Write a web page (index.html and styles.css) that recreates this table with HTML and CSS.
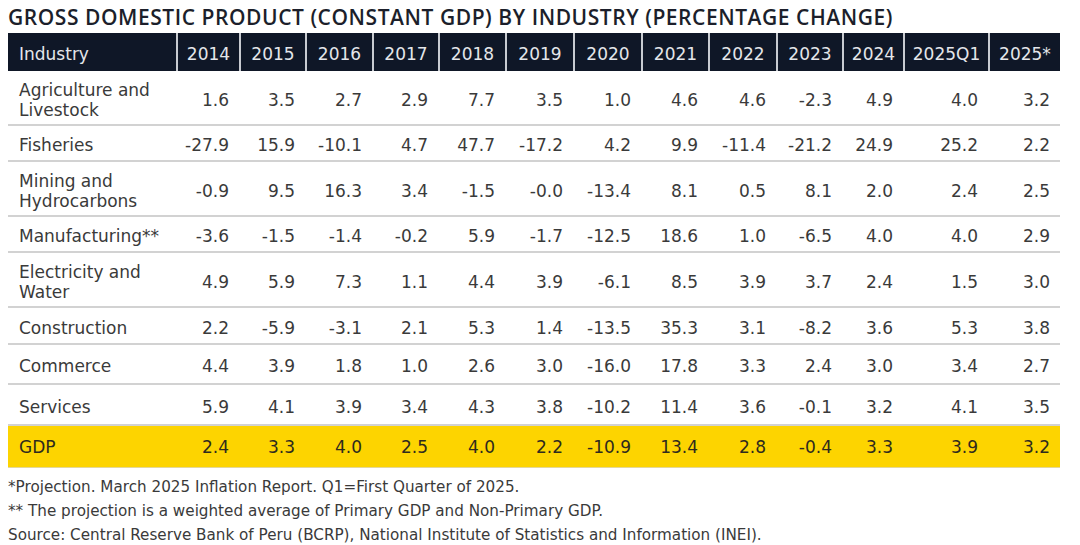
FILE: index.html
```html
<!DOCTYPE html>
<html lang="en">
<head>
<meta charset="utf-8">
<title>GDP by Industry</title>
<link rel="stylesheet" href="styles.css">
</head>
<body>
<div class="page">
  <h1 class="title">GROSS DOMESTIC PRODUCT (CONSTANT GDP) BY INDUSTRY (PERCENTAGE CHANGE)</h1>
  <div class="table">
    <div class="row head">
      <div class="cell name">Industry</div>
      <div class="cell">2014</div><div class="cell">2015</div><div class="cell">2016</div><div class="cell">2017</div><div class="cell">2018</div><div class="cell">2019</div><div class="cell">2020</div><div class="cell">2021</div><div class="cell">2022</div><div class="cell">2023</div><div class="cell">2024</div><div class="cell">2025Q1</div><div class="cell">2025*</div>
    </div>
    <div class="row body tall">
      <div class="cell name">Agriculture and<br>Livestock</div>
      <div class="cell">1.6</div><div class="cell">3.5</div><div class="cell">2.7</div><div class="cell">2.9</div><div class="cell">7.7</div><div class="cell">3.5</div><div class="cell">1.0</div><div class="cell">4.6</div><div class="cell">4.6</div><div class="cell">-2.3</div><div class="cell">4.9</div><div class="cell">4.0</div><div class="cell">3.2</div>
    </div>
    <div class="row body short">
      <div class="cell name">Fisheries</div>
      <div class="cell">-27.9</div><div class="cell">15.9</div><div class="cell">-10.1</div><div class="cell">4.7</div><div class="cell">47.7</div><div class="cell">-17.2</div><div class="cell">4.2</div><div class="cell">9.9</div><div class="cell">-11.4</div><div class="cell">-21.2</div><div class="cell">24.9</div><div class="cell">25.2</div><div class="cell">2.2</div>
    </div>
    <div class="row body tall">
      <div class="cell name">Mining and<br>Hydrocarbons</div>
      <div class="cell">-0.9</div><div class="cell">9.5</div><div class="cell">16.3</div><div class="cell">3.4</div><div class="cell">-1.5</div><div class="cell">-0.0</div><div class="cell">-13.4</div><div class="cell">8.1</div><div class="cell">0.5</div><div class="cell">8.1</div><div class="cell">2.0</div><div class="cell">2.4</div><div class="cell">2.5</div>
    </div>
    <div class="row body short">
      <div class="cell name">Manufacturing**</div>
      <div class="cell">-3.6</div><div class="cell">-1.5</div><div class="cell">-1.4</div><div class="cell">-0.2</div><div class="cell">5.9</div><div class="cell">-1.7</div><div class="cell">-12.5</div><div class="cell">18.6</div><div class="cell">1.0</div><div class="cell">-6.5</div><div class="cell">4.0</div><div class="cell">4.0</div><div class="cell">2.9</div>
    </div>
    <div class="row body tall">
      <div class="cell name">Electricity and<br>Water</div>
      <div class="cell">4.9</div><div class="cell">5.9</div><div class="cell">7.3</div><div class="cell">1.1</div><div class="cell">4.4</div><div class="cell">3.9</div><div class="cell">-6.1</div><div class="cell">8.5</div><div class="cell">3.9</div><div class="cell">3.7</div><div class="cell">2.4</div><div class="cell">1.5</div><div class="cell">3.0</div>
    </div>
    <div class="row body mid">
      <div class="cell name">Construction</div>
      <div class="cell">2.2</div><div class="cell">-5.9</div><div class="cell">-3.1</div><div class="cell">2.1</div><div class="cell">5.3</div><div class="cell">1.4</div><div class="cell">-13.5</div><div class="cell">35.3</div><div class="cell">3.1</div><div class="cell">-8.2</div><div class="cell">3.6</div><div class="cell">5.3</div><div class="cell">3.8</div>
    </div>
    <div class="row body wide">
      <div class="cell name">Commerce</div>
      <div class="cell">4.4</div><div class="cell">3.9</div><div class="cell">1.8</div><div class="cell">1.0</div><div class="cell">2.6</div><div class="cell">3.0</div><div class="cell">-16.0</div><div class="cell">17.8</div><div class="cell">3.3</div><div class="cell">2.4</div><div class="cell">3.0</div><div class="cell">3.4</div><div class="cell">2.7</div>
    </div>
    <div class="row body wide2">
      <div class="cell name">Services</div>
      <div class="cell">5.9</div><div class="cell">4.1</div><div class="cell">3.9</div><div class="cell">3.4</div><div class="cell">4.3</div><div class="cell">3.8</div><div class="cell">-10.2</div><div class="cell">11.4</div><div class="cell">3.6</div><div class="cell">-0.1</div><div class="cell">3.2</div><div class="cell">4.1</div><div class="cell">3.5</div>
    </div>
    <div class="row total">
      <div class="cell name">GDP</div>
      <div class="cell">2.4</div><div class="cell">3.3</div><div class="cell">4.0</div><div class="cell">2.5</div><div class="cell">4.0</div><div class="cell">2.2</div><div class="cell">-10.9</div><div class="cell">13.4</div><div class="cell">2.8</div><div class="cell">-0.4</div><div class="cell">3.3</div><div class="cell">3.9</div><div class="cell">3.2</div>
    </div>
  </div>
  <div class="notes">
    <p>*Projection. March 2025 Inflation Report. Q1=First Quarter of 2025.</p>
    <p>** The projection is a weighted average of Primary GDP and Non-Primary GDP.</p>
    <p>Source: Central Reserve Bank of Peru (BCRP), National Institute of Statistics and Information (INEI).</p>
  </div>
</div>
</body>
</html>
```
FILE: styles.css
```css
html, body {
  margin: 0;
  padding: 0;
  background: #ffffff;
}

.page {
  padding: 0 20px 0 8px;
  font-family: "DejaVu Sans", Verdana, sans-serif;
  color: #3a3a3a;
}

.title {
  margin: 0;
  height: 33px;
  font-family: "Open Sans", "DejaVu Sans", sans-serif;
  font-weight: 600;
  font-size: 21px;
  letter-spacing: 0.55px;
  line-height: 34px;
  color: #1c1f2b;
  white-space: nowrap;
}

.table {
  width: 1052px;
  display: flex;
  flex-direction: column;
}

.row {
  display: grid;
  grid-template-columns: 168px 63px 66px 67px 66px 67px 68px 68px 67px 68px 66px 61px 85px 72px;
  box-sizing: border-box;
  font-size: 17px;
  line-height: 20px;
}

.cell {
  display: flex;
  align-items: center;
  justify-content: flex-end;
  padding-top: 4px;
  padding-right: 10px;
  white-space: nowrap;
}

.cell.name {
  justify-content: flex-start;
  padding-left: 11px;
  padding-right: 0;
}

.head {
  height: 38px;
  background: #0f1727;
  color: #e4e6ea;
}

.head .cell {
  justify-content: center;
  padding-right: 0;
  border-left: 2px solid #c8cbd1;
}

.head .cell:first-child {
  border-left: none;
  justify-content: flex-start;
}

.body {
  border-bottom: 2px solid #d2d2d2;
}

.tall { height: 55px; }
.short { height: 36px; }
.mid { height: 37px; }
.wide { height: 40px; }
.wide2 { height: 41px; }

.total {
  height: 42px;
  background: #fdd400;
  color: #2e2a1e;
  border-bottom: 1px solid #e3d79a;
}

.total .cell {
  padding-top: 1px;
}

.notes {
  padding-top: 7px;
  font-size: 15.2px;
  line-height: 24px;
  color: #3a3a3a;
}

.notes p {
  margin: 0;
  white-space: nowrap;
}
```
